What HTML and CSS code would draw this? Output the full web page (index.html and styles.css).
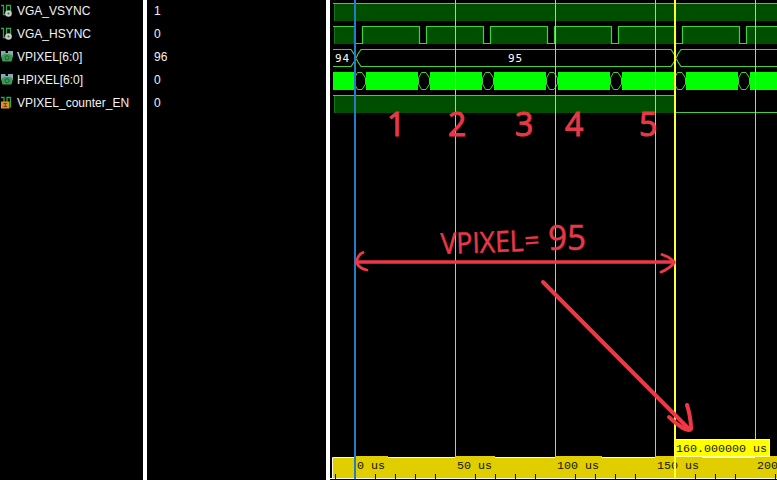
FILE: index.html
```
<!DOCTYPE html>
<html lang="en">
<head>
<meta charset="utf-8">
<title>Waveform viewer</title>
<link rel="stylesheet" href="styles.css">
</head>
<body>
<svg class="defs" width="0" height="0">
  <defs>
    <symbol id="scalar" viewBox="0 0 12 15">
      <path d="M0 2.500H2.500V11.500H6M5.500 12V2.500H9.500V11" fill="none" stroke="#35a04e" stroke-width="1.3"/>
      <circle cx="7.500" cy="10.500" r="3.300" fill="#c8ccc8"/><circle cx="7.500" cy="10.500" r="1.100" fill="#545854"/>
    </symbol>
    <symbol id="bus" viewBox="0 0 12 15">
      <path d="M0 2H4.500V4H7V2H12V8H0Z" fill="#86aab5"/>
      <path d="M0 7L3 5H9L12 7L10.500 12.500H1.500Z" fill="#3d9955"/>
      <circle cx="6" cy="8.800" r="2" fill="none" stroke="#17602c"/>
    </symbol>
    <symbol id="enable" viewBox="0 0 12 15">
      <path d="M0 2.500H3V8M6 8V2.500H9.500V12.500" fill="none" stroke="#35a04e" stroke-width="1.3"/>
      <rect x="0" y="6.500" width="8.500" height="7" fill="#dc9128"/>
      <path d="M2.500 8.500H6M4.250 8.500V11.500M2.500 11.500H6" stroke="#704006" fill="none"/>
    </symbol>
  </defs>
</svg>
<main class="viewer">
  <section class="names">
    <div class="row"><svg class="icon"><use href="#scalar"/></svg><span>VGA_VSYNC</span></div>
    <div class="row"><svg class="icon"><use href="#scalar"/></svg><span>VGA_HSYNC</span></div>
    <div class="row"><svg class="icon"><use href="#bus"/></svg><span>VPIXEL[6:0]</span></div>
    <div class="row"><svg class="icon"><use href="#bus"/></svg><span>HPIXEL[6:0]</span></div>
    <div class="row"><svg class="icon"><use href="#enable"/></svg><span>VPIXEL_counter_EN</span></div>
  </section>
  <div class="divider"></div>
  <section class="values">
    <div class="row">1</div><div class="row">0</div><div class="row">96</div><div class="row">0</div><div class="row">0</div>
  </section>
  <div class="divider"></div>
  <svg class="waves" viewBox="330 0 447 480">
    <!-- signal levels -->
    <path class="high" d="M334 4H777V21H334ZM334 27H355V44H334ZM362 27H420V44H362ZM426 27H484V44H426ZM490 27H548V44H490ZM554 27H612V44H554ZM618 27H675V44H618ZM682 27H740V44H682ZM746 27H777V44H746ZM334 96H675V113H334Z"/>
    <path class="dim" d="M334.5 4V21M334.5 27V44M334.5 96V113"/>
    <path class="trace" d="M333 3.5H777M333 26.5H354.500V43.500H362.500V26.500H419.500V43.500H426.500V26.500H483.500V43.500H490.500V26.500H547.500V43.500H554.500V26.500H611.500V43.500H618.500V26.500H675.500V43.500H682.500V26.500H739.500V43.500H746.500V26.500H777M333 95.500H675M675 112.500H777"/>
    <path class="trace" d="M333 49.500H351L354 54L358 62L361 66.500H671L674 62L678 54L681 49.500H777M333 66.500H351L354 62L358 54L361 49.500H671L674 54L678 62L681 66.500H777"/>
    <path class="busy" d="M333 72H355V90H333ZM366 72H418V90H366ZM430 72H482V90H430ZM494 72H546V90H494ZM558 72H610V90H558ZM622 72H675V90H622ZM686 72H738V90H686ZM750 72H777V90H750Z"/>
    <path class="trace thin" d="M357.500 72.500H362L365.500 78V84L362 89.500H357.500L354.500 84V78ZM421.500 72.500H426L429.500 78V84L426 89.500H421.500L418.500 84V78ZM485.500 72.500H490L493.500 78V84L490 89.500H485.500L482.500 84V78ZM549.500 72.500H554L557.500 78V84L554 89.500H549.500L546.500 84V78ZM613.500 72.500H618L621.500 78V84L618 89.500H613.500L610.500 84V78ZM677.500 72.500H682L685.500 78V84L682 89.500H677.500L674.500 84V78ZM741.500 72.500H746L749.500 78V84L746 89.500H741.500L738.500 84V78Z"/>
    <text class="bus-value" x="335" y="62" textLength="14">94</text>
    <text class="bus-value" x="508" y="62" textLength="14">95</text>

    <!-- time ruler -->
    <rect class="ruler" x="333" y="458" width="444" height="20"/>
    <path class="ruler-edge" d="M332.500 478V457.500H777M330 478.500H777"/>
    <path class="ruler" d="M356 456H388V460H356ZM456 456H495V460H456ZM556 456H602V460H556ZM656 456H702V460H656ZM756 456H777V460H756Z"/>
    <path class="ticks" d="M335.500 474V479M375.500 474V479M395.500 474V479M415.500 474V479M435.500 474V479M475.500 474V479M495.500 474V479M515.500 474V479M535.500 474V479M575.500 474V479M595.500 474V479M615.500 474V479M635.500 474V479M695.500 474V479M715.500 474V479M735.500 474V479M775.500 474V479"/>
    <path class="grid" d="M455.500 0V456M555.500 0V456M655.500 0V456M755.500 0V456"/>
    <path class="grid faint" d="M455.500 456V478M555.500 456V478M655.500 456V478M755.500 456V478"/>
    <text class="time" x="357" y="469">0 us</text>
    <text class="time" x="457" y="469">50 us</text>
    <text class="time" x="557" y="469">100 us</text>
    <text class="time" x="657" y="469">150 us</text>
    <text class="time" x="757" y="469">200</text>

    <!-- cursors -->
    <path class="marker" d="M355 0V479"/>
    <path class="cursor" d="M675 0V479"/>
    <rect class="time-box" x="675.500" y="439.500" width="94" height="17"/>
    <text class="time" x="676" y="452">160.000000 us</text>

    <!-- annotations -->
    <g class="note digits">
      <text x="387" y="136">1</text>
      <text x="448" y="136">2</text>
      <text x="515" y="136">3</text>
      <text x="565" y="136">4</text>
      <text x="639" y="136">5</text>
    </g>
    <text class="note" font-size="29" textLength="83" lengthAdjust="spacingAndGlyphs" transform="translate(441 254) rotate(-2)">VPIXEL</text>
    <text class="note" font-size="26" textLength="15" lengthAdjust="spacingAndGlyphs" transform="translate(525 250) rotate(-4)">=</text>
    <text class="note" font-size="34" textLength="38" lengthAdjust="spacingAndGlyphs" x="548" y="250">95</text>
    <path class="arrow" d="M356 262H674"/>
    <path class="arrow head" d="M363 252.500C359 254 357 259 356.500 262C358 267 362 269 367 270M662 254.500L668 257Q673 260 674 263Q669 269 661 272"/>
    <path class="arrow diagonal" d="M543 282L688 428"/>
    <path class="arrow diagonal" d="M669 417Q683 430 689 430Q692 430 691 426Q690 414 687 405"/>
  </svg>
</main>
</body>
</html>
```
FILE: styles.css
```
* { box-sizing: border-box; }
body {
  margin: 0;
  background: #000;
  color: #f2f2f2;
  font: 12px "Liberation Sans", sans-serif;
  overflow: hidden;
}
.defs { position: absolute; }
.viewer {
  display: grid;
  grid-template-columns: 143px 4px 179px 4px 447px;
  height: 480px;
}
.divider { background: #fff; }
.row {
  display: flex;
  align-items: center;
  height: 23px;
  padding-bottom: 2px;
  white-space: nowrap;
}
.names .row { gap: 4px; padding-left: 1px; }
.values { padding-left: 7px; }
.icon { width: 12px; height: 15px; flex: none; }
.waves { display: block; width: 447px; height: 480px; }
.high { fill: #004e00; }
.dim { stroke: #1c741c; }
.trace { fill: none; stroke: #40d040; stroke-width: 1.2; }
.trace.thin { fill: #000; stroke-width: 1; }
.busy { fill: #0f0; }
.bus-value { fill: #fff; font: 11px "DejaVu Sans Mono", monospace; }
.time { fill: #151500; font: 11.67px "Liberation Mono", monospace; }
.ruler { fill: #e0ce00; }
.ruler-edge { fill: none; stroke: #fffde0; }
.ticks { stroke: #151500; }
.grid { stroke: #c0c0c0; }
.grid.faint { stroke: #cfc46a; }
.marker { stroke: #237bcb; stroke-width: 2; }
.cursor { stroke: #ffff32; stroke-width: 2; }
.time-box { fill: #ff0; stroke: #ffff9c; }
.note { fill: #e83847; stroke: #e83847; stroke-width: .5; font-family: "Open Sans", sans-serif; }
.digits { font-size: 32px; stroke-width: 1; }
.arrow {
  fill: none;
  stroke: #ee3846;
  stroke-width: 3.5;
  stroke-linecap: round;
  stroke-linejoin: round;
}
.arrow.head { stroke-width: 2.8; }
.arrow.diagonal { stroke-width: 4; }
```
